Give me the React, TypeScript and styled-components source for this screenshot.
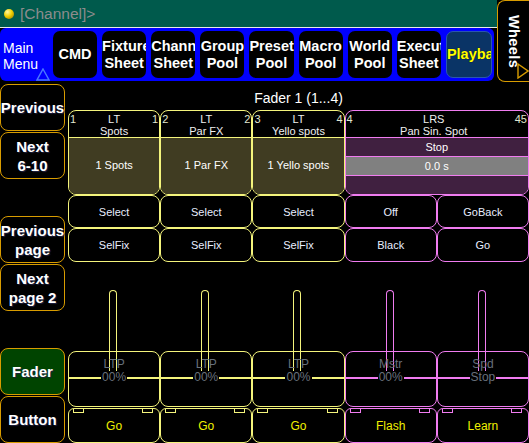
import React, { FC } from 'react';
import styled, { createGlobalStyle } from 'styled-components';

// colours of the executor sheet
const YELLOW = '#f4f47c';
const PINK = '#f07cf0';
const ORANGE = '#d89c00';

type Tone = 'yellow' | 'pink';
const toneColor = (t: Tone) => (t === 'pink' ? PINK : YELLOW);

const GlobalStyle = createGlobalStyle`
    html, body {
        margin: 0;
        padding: 0;
        background: #000;
    }
    body {
        font-family: "Liberation Sans", Arial, sans-serif;
    }
`;

const Screen = styled.div`
    width: 529px;
    height: 443px;
    overflow: hidden;
    background: #000;
    display: flex;
    flex-direction: column;
`;

/* ---------- top: command line, main menu, wheels ---------- */

const TopArea = styled.div`
    display: grid;
    grid-template-columns: minmax(0, 1fr) 32px;
    grid-template-rows: 28px 54px;
    height: 83px;
`;

const CommandLine = styled.div`
    grid-column: 1;
    grid-row: 1;
    background: #005a4c;
    border-bottom: 1px solid #e8e8e8;
    display: flex;
    align-items: center;
    gap: 6px;
    padding-left: 4px;
`;

const Ball = styled.span`
    width: 10px;
    height: 10px;
    border-radius: 50%;
    background: radial-gradient(circle at 35% 30%, #fff8a0 0%, #f0d000 45%, #8a6a00 100%);
`;

const Prompt = styled.span`
    color: #8c8c8c;
    font-size: 15.5px;
`;

const MenuBar = styled.div`
    grid-column: 1;
    grid-row: 2;
    min-width: 0;
    margin-right: 3px;
    margin-bottom: 1px;
    background: #0000ff;
    border-radius: 6px;
    display: flex;
    align-items: center;
    padding: 0 2px 0 3px;
    position: relative;
`;

const MainMenu = styled.div`
    width: 50px;
    flex: none;
    color: #fff;
    font-size: 14px;
    line-height: 16px;
    padding-top: 2px;
`;

const Corner = styled.svg`
    position: absolute;
`;

const MenuButtons = styled.div`
    flex: 1;
    min-width: 0;
    display: flex;
    gap: 5px;
`;

const MenuButton = styled.div<{ $active?: boolean }>`
    flex: 1;
    min-width: 0;
    height: 47px;
    border-radius: 7px;
    background: ${p => (p.$active ? '#0a3466' : '#000')};
    border: ${p => (p.$active ? '1px solid #2a56b0' : 'none')};
    box-sizing: border-box;
    color: ${p => (p.$active ? '#ffff00' : '#fff')};
    font-weight: bold;
    font-size: 14.5px;
    line-height: 17px;
    display: flex;
    flex-direction: column;
    justify-content: center;
    text-align: center;
    overflow: hidden;
    white-space: nowrap;
    text-shadow: 0 0 1px #000;
`;

const MenuLine = styled.span`
    display: block;
`;

const Wheels = styled.div`
    grid-column: 2;
    grid-row: 1 / span 2;
    border: 1px solid ${ORANGE};
    border-right: none;
    border-radius: 8px 0 0 8px;
    position: relative;
    display: flex;
    justify-content: center;
    padding-top: 14px;
    color: #fff;
    font-weight: bold;
    font-size: 14.5px;
`;

const Vertical = styled.span`
    writing-mode: vertical-rl;
    letter-spacing: 0.4px;
`;

/* ---------- body ---------- */

const Body = styled.div`
    flex: 1;
    display: grid;
    grid-template-columns: 65px 1fr;
    column-gap: 3px;
`;

const LeftColumn = styled.div`
    display: flex;
    flex-direction: column;
    justify-content: space-between;
    padding-top: 1px;
`;

const LeftGroup = styled.div`
    display: flex;
    flex-direction: column;
    gap: 1px;
`;

const SideButton = styled.div<{ $green?: boolean }>`
    height: 47px;
    box-sizing: border-box;
    border: 1px solid ${ORANGE};
    border-radius: 8px;
    background: ${p => (p.$green ? '#004400' : '#000')};
    color: #fff;
    font-weight: bold;
    font-size: 15px;
    line-height: 19px;
    text-align: center;
    display: flex;
    align-items: center;
    justify-content: center;
    white-space: nowrap;
    text-shadow: 1px 1px 1px #202040;
`;

const Sheet = styled.div`
    display: grid;
    grid-template-columns: repeat(5, 1fr);
    grid-template-rows: 27px 85px 33px 34px 89px 57px 35px;
    font-size: 11px;
`;

const Title = styled.div`
    grid-column: span 5;
    color: #fff;
    font-size: 14px;
    text-align: center;
    padding-top: 7px;
`;

const Block = styled.div<{ $tone: Tone; $span: number }>`
    grid-column: span ${p => p.$span};
    border: 1px solid ${p => toneColor(p.$tone)};
    border-radius: 8px;
    display: flex;
    flex-direction: column;
    overflow: hidden;
`;

const BlockHead = styled.div<{ $tone: Tone }>`
    height: 27px;
    flex: none;
    display: flex;
    align-items: flex-start;
    border-bottom: 1px solid ${p => toneColor(p.$tone)};
    color: #f0f0f0;
    line-height: 12px;
    padding-top: 2px;
    box-sizing: border-box;
`;

const Num = styled.span`
    flex: none;
    padding: 0 1px;
    color: #e0e8d0;
`;

const HeadText = styled.div`
    flex: 1;
    text-align: center;
    white-space: nowrap;
`;

const BlockBody = styled.div`
    flex: 1;
    background: #403c22;
    color: #fff;
    display: flex;
    align-items: center;
    justify-content: center;
    padding-bottom: 2px;
`;

const InfoRow = styled.div<{ $gray?: boolean; $line?: boolean }>`
    flex: 1;
    background: ${p => (p.$gray ? '#808080' : '#402040')};
    border-top: ${p => (p.$line ? `1px solid ${PINK}` : 'none')};
    color: #fff;
    display: flex;
    align-items: center;
    justify-content: center;
`;

const Cell = styled.div<{ $tone: Tone }>`
    border: 1px solid ${p => toneColor(p.$tone)};
    border-radius: 8px;
    color: #e8eeff;
    display: flex;
    align-items: center;
    justify-content: center;
`;

const Gap = styled.div`
    grid-column: span 5;
`;

const FaderBox = styled.div<{ $tone: Tone }>`
    position: relative;
    border: 1px solid ${p => toneColor(p.$tone)};
    border-radius: 8px;
    margin-bottom: 1px;
    display: flex;
    flex-direction: column;
    align-items: center;
    padding-top: 6px;
    color: #68707c;
    font-size: 12px;
    line-height: 13px;

    &::after {
        content: '';
        position: absolute;
        left: -1px;
        right: -1px;
        top: 25px;
        height: 2px;
        background: ${p => toneColor(p.$tone)};
    }
`;

const Slot = styled.div<{ $tone: Tone }>`
    position: absolute;
    top: -62px;
    left: calc(50% - 5px);
    width: 8px;
    height: 83px;
    border: 1px solid ${p => toneColor(p.$tone)};
    border-bottom: none;
    border-radius: 5px 5px 0 0;
    box-sizing: border-box;
`;

const FaderName = styled.span`
    position: relative;
    z-index: 1;
`;

const FaderValue = styled.span`
    position: relative;
    z-index: 2;
    background: #000;
    padding: 0 1px;
`;

const GoButton = styled.div<{ $tone: Tone }>`
    position: relative;
    border: 1px solid ${p => toneColor(p.$tone)};
    border-radius: 6px 6px 8px 8px;
    color: #f0f000;
    font-size: 12px;
    display: flex;
    align-items: center;
    justify-content: center;
    padding-top: 1px;

    &::before, &::after {
        content: '';
        position: absolute;
        top: 0;
        width: 9px;
        height: 3px;
        border: 1px solid ${p => toneColor(p.$tone)};
        border-top: none;
    }
    &::before { left: 4px; }
    &::after { right: 6px; }
`;

/* ---------- data ---------- */

interface Exec {
    tone: Tone;
    span: number;
    left: string;
    right: string;
    kind: string;
    name: string;
    label?: string;
}

const execs: Exec[] = [
    { tone: 'yellow', span: 1, left: '1', right: '1', kind: 'LT', name: 'Spots', label: '1 Spots' },
    { tone: 'yellow', span: 1, left: '2', right: '2', kind: 'LT', name: 'Par FX', label: '1 Par FX' },
    { tone: 'yellow', span: 1, left: '3', right: '4', kind: 'LT', name: 'Yello spots', label: '1 Yello spots' },
    { tone: 'pink', span: 2, left: '4', right: '45', kind: 'LRS', name: 'Pan Sin. Spot' },
];

const tones: Tone[] = ['yellow', 'yellow', 'yellow', 'pink', 'pink'];
const buttonRows = [
    ['Select', 'Select', 'Select', 'Off', 'GoBack'],
    ['SelFix', 'SelFix', 'SelFix', 'Black', 'Go'],
];
const faders = [
    ['LTP', '00%'], ['LTP', '00%'], ['LTP', '00%'], ['Mstr', '00%'], ['Spd', 'Stop'],
];
const goButtons = ['Go', 'Go', 'Go', 'Flash', 'Learn'];

const menu: [string, string][] = [
    ['Fixture', 'Sheet'], ['Channel', 'Sheet'], ['Group', 'Pool'], ['Preset', 'Pool'],
    ['Macro', 'Pool'], ['World', 'Pool'], ['Executor', 'Sheet'],
];

const App: FC = () => {
    return (
        <Screen>
            <GlobalStyle />
            <TopArea>
                <CommandLine>
                    <Ball />
                    <Prompt>[Channel]&gt;</Prompt>
                </CommandLine>
                <MenuBar>
                    <MainMenu>Main<br />Menu</MainMenu>
                    <Corner width="14" height="13" style={{ left: 36, top: 40 }}>
                        <polygon points="7,1 13,12 1,12" fill="none" stroke="#4a78ff" strokeWidth="1.4" />
                    </Corner>
                    <MenuButtons>
                        <MenuButton>CMD</MenuButton>
                        {menu.map(([a, b]) => (
                            <MenuButton key={a}>
                                <MenuLine>{a}</MenuLine>
                                <MenuLine>{b}</MenuLine>
                            </MenuButton>
                        ))}
                        <MenuButton $active>Playback</MenuButton>
                    </MenuButtons>
                </MenuBar>
                <Wheels>
                    <Vertical>Wheels</Vertical>
                    <Corner width="12" height="16" style={{ right: 0, bottom: 2 }}>
                        <polygon points="1,1 11,8 1,15" fill="none" stroke={ORANGE} strokeWidth="1.4" />
                    </Corner>
                </Wheels>
            </TopArea>

            <Body>
                <LeftColumn>
                    <LeftGroup>
                        <SideButton>Previous</SideButton>
                        <SideButton>Next<br />6-10</SideButton>
                    </LeftGroup>
                    <LeftGroup>
                        <SideButton>Previous<br />page</SideButton>
                        <SideButton>Next<br />page 2</SideButton>
                    </LeftGroup>
                    <LeftGroup>
                        <SideButton $green>Fader</SideButton>
                        <SideButton>Button</SideButton>
                    </LeftGroup>
                </LeftColumn>

                <Sheet>
                    <Title>Fader 1 (1...4)</Title>

                    {execs.map(e => (
                        <Block key={e.name} $tone={e.tone} $span={e.span}>
                            <BlockHead $tone={e.tone}>
                                <Num>{e.left}</Num>
                                <HeadText>{e.kind}<br />{e.name}</HeadText>
                                <Num>{e.right}</Num>
                            </BlockHead>
                            {e.label ? (
                                <BlockBody>{e.label}</BlockBody>
                            ) : (
                                <>
                                    <InfoRow>Stop</InfoRow>
                                    <InfoRow $gray $line>0.0 s</InfoRow>
                                    <InfoRow $line />
                                </>
                            )}
                        </Block>
                    ))}

                    {buttonRows.map(row =>
                        row.map((label, i) => (
                            <Cell key={label + i} $tone={tones[i]}>{label}</Cell>
                        ))
                    )}

                    <Gap />

                    {faders.map(([name, value], i) => (
                        <FaderBox key={i} $tone={tones[i]}>
                            <Slot $tone={tones[i]} />
                            <FaderName>{name}</FaderName>
                            <FaderValue>{value}</FaderValue>
                        </FaderBox>
                    ))}

                    {goButtons.map((label, i) => (
                        <GoButton key={i} $tone={tones[i]}>{label}</GoButton>
                    ))}
                </Sheet>
            </Body>
        </Screen>
    );
};

export default App;
